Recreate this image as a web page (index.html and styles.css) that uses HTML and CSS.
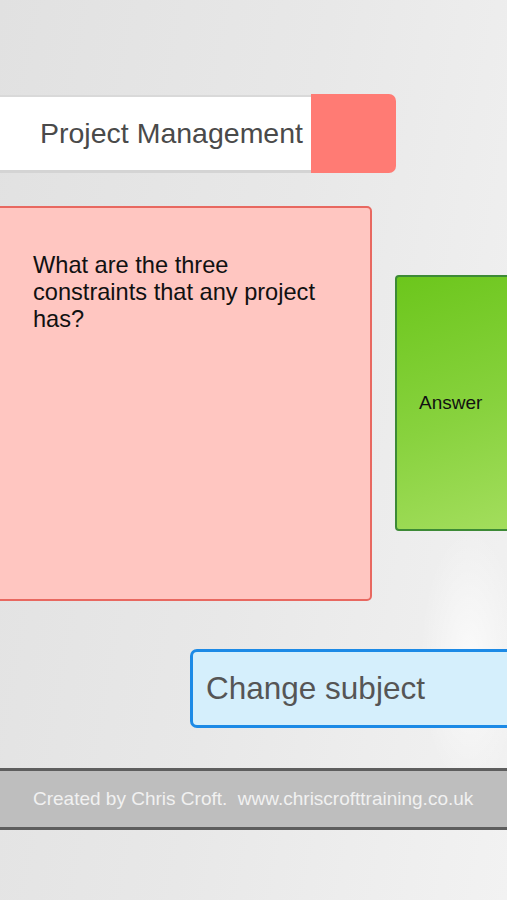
FILE: index.html
```html
<!DOCTYPE html>
<html>
<head>
<meta charset="utf-8">
<link rel="stylesheet" href="styles.css">
</head>
<body>
<div class="screen">
  <div class="header">
    <div class="title-box"><span class="title">Project Management</span></div>
    <div class="title-tab"></div>
  </div>
  <div class="cards">
    <div class="question-card">
      <p class="question">What are the three constraints that any project has?</p>
    </div>
    <div class="answer-card"><span class="answer">Answer</span></div>
  </div>
  <div class="change-row">
    <div class="change-btn">Change subject</div>
  </div>
  <div class="footer">Created by Chris Croft.&nbsp; www.chriscrofttraining.co.uk</div>
</div>
</body>
</html>
```

FILE: styles.css
```css
html, body {
  margin: 0;
  padding: 0;
}
body {
  width: 507px;
  height: 900px;
  overflow: hidden;
  font-family: "Liberation Sans", Arial, sans-serif;
  background:
    radial-gradient(ellipse 50px 130px at 470px 660px, rgba(255,255,255,0.7), rgba(255,255,255,0) 100%),
    linear-gradient(100deg, #e1e1e1 0%, #e8e8e8 50%, #f2f2f2 100%);
}
.screen {
  display: flex;
  flex-direction: column;
  width: 507px;
  overflow: hidden;
}
.header {
  display: flex;
  margin-top: 94px;
  height: 79px;
}
.title-box {
  width: 311px;
  flex-shrink: 0;
  box-sizing: border-box;
  margin-top: 1px;
  height: 78px;
  background: #fff;
  border-top: 2px solid #d9d9d9;
  border-bottom: 3px solid #d4d4d4;
  display: flex;
  align-items: center;
  justify-content: flex-end;
  padding-right: 8px;
}
.title {
  font-size: 28.5px;
  color: #4a4a4a;
}
.title-tab {
  width: 85px;
  flex-shrink: 0;
  height: 79px;
  background: #ff7b74;
  border-radius: 0 7px 7px 0;
}
.cards {
  display: flex;
  align-items: flex-start;
  margin-top: 33px;
}
.question-card {
  margin-left: -6px;
  width: 378px;
  flex-shrink: 0;
  height: 395px;
  box-sizing: border-box;
  background: #ffc6c1;
  border: 2px solid #e86860;
  border-radius: 5px;
  padding: 44px 34px 0 37px;
}
.question {
  margin: 0;
  font-size: 23.6px;
  line-height: 27px;
  color: #111;
}
.answer-card {
  margin-top: 69px;
  margin-left: 23px;
  width: 130px;
  flex-shrink: 0;
  height: 256px;
  box-sizing: border-box;
  border: 2px solid #3d8a36;
  border-radius: 4px;
  background: linear-gradient(160deg, #6cc61c 0%, #88d23e 55%, #a4de5e 100%);
  display: flex;
  align-items: center;
  padding-left: 22px;
}
.answer {
  font-size: 19px;
  color: #111;
}
.change-row {
  display: flex;
  margin-top: 48px;
}
.change-btn {
  margin-left: 190px;
  width: 340px;
  flex-shrink: 0;
  height: 79px;
  box-sizing: border-box;
  border: 3px solid #1c8ae6;
  border-radius: 7px;
  background: #d5effc;
  display: flex;
  align-items: center;
  padding-left: 13px;
  font-size: 31.5px;
  color: #555;
}
.footer {
  margin-top: 40px;
  height: 62px;
  box-sizing: border-box;
  border-top: 3px solid #5e5e5e;
  border-bottom: 3px solid #5e5e5e;
  background: #bebebe;
  display: flex;
  align-items: center;
  padding-left: 33px;
  font-size: 19px;
  color: #f1f1f1;
}
```
